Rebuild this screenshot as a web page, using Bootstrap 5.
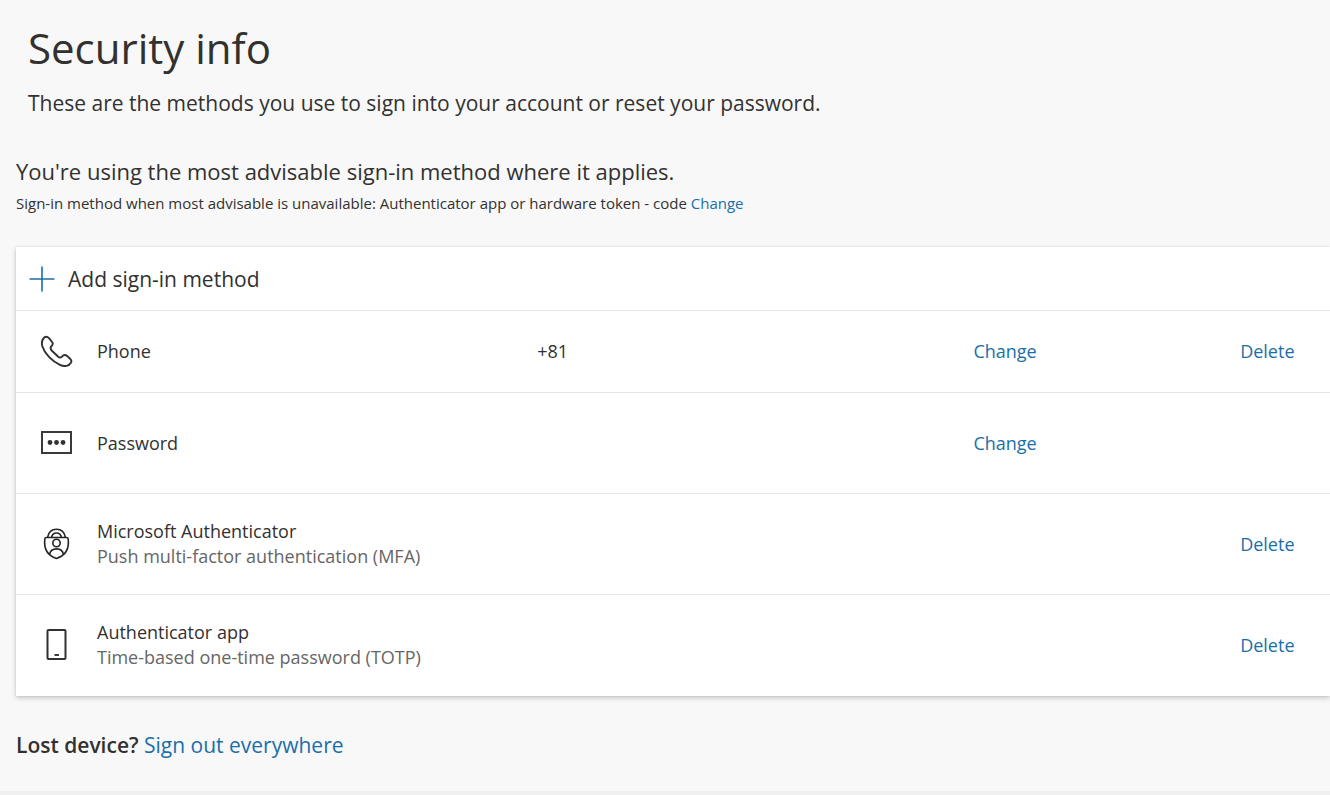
<!DOCTYPE html>
<html lang="en">
<head>
<meta charset="utf-8">
<meta name="viewport" content="width=device-width, initial-scale=1">
<title>Security info</title>
<link href="https://cdn.jsdelivr.net/npm/bootstrap@5.3.0/dist/css/bootstrap.min.css" rel="stylesheet">
<style>
body { background: #f8f8f8; color: #323130; font-family: "Open Sans", "Noto Sans", sans-serif; font-size: 18px; line-height: 25px; }
a { color: #1a6fa8; text-decoration: none; }
a:hover { text-decoration: underline; }
.page-head { padding: 20px 12px 39px; }
.page-title { font-size: 42px; line-height: 56px; margin-bottom: 12px; }
.intro, .add-method, .lost { font-size: 21px; line-height: 30px; }
.default-method { font-size: 22px; line-height: 28px; }
.fallback-method { font-size: 15px; line-height: 36px; }
.methods { margin: 26px 0 34px; box-shadow: 0 2px 5px rgba(0,0,0,.2), 0 0 2px rgba(0,0,0,.1); }
.add-method { color: inherit; height: 63px; }
.method-table { table-layout: fixed; }
.method-table td { border-top: 1px solid #e6e6e6; height: 101px; padding: 0; vertical-align: middle; }
.method-table tr:first-child td { height: 82px; }
.col-icon { width: 81px; }
.col-name { width: 33.5%; }
.col-value { width: 33.2%; }
.col-change { width: 20.3%; }
.hint { color: #666; }
.page-foot { height: 4px; background: #f0f0f0; }
svg { display: block; }
</style>
</head>
<body class="d-flex flex-column min-vh-100">
<main class="flex-grow-1 ps-3">
  <header class="page-head">
    <h1 class="page-title fw-normal">Security info</h1>
    <p class="intro mb-0">These are the methods you use to sign into your account or reset your password.</p>
  </header>
  <section>
    <p class="default-method mb-0">You're using the most advisable sign-in method where it applies.</p>
    <p class="fallback-method mb-0">Sign-in method when most advisable is unavailable: Authenticator app or hardware token - code <a href="#">Change</a></p>
  </section>
  <section class="methods bg-white">
    <button type="button" class="add-method btn border-0 rounded-0 w-100 d-flex align-items-center gap-2 text-start px-2">
      <svg width="36" height="36" viewBox="0 0 36 36" fill="none" stroke="#1a6fa8" stroke-width="1.6" aria-hidden="true"><path d="M18 5.500v25M5.500 18h25"/></svg>
      <span>Add sign-in method</span>
    </button>
    <table class="method-table w-100">
      <colgroup><col class="col-icon"><col class="col-name"><col class="col-value"><col class="col-change"><col></colgroup>
      <tbody>
        <tr>
          <td><svg class="mx-auto" width="34" height="34" viewBox="0 0 34 34" fill="none" stroke="#323130" stroke-width="1.900" stroke-linejoin="round" aria-hidden="true"><path d="M4.300 2.400Q6.800 .8 9 3.200L12.400 7.500Q13.400 9.300 11.400 11.200Q9.800 13 11.400 15.200L18.200 21.800Q20 23.300 21.800 21.800L23.300 20.400Q25 19.300 26.800 20.800L30.200 23.800Q32.200 25.800 30.900 27.700C29 31 24.500 32 20 29.900C12 26 4.500 18.500 2.200 11Q1 5 4.300 2.400Z"/></svg></td>
          <td>Phone</td><td>+81</td><td><a href="#">Change</a></td><td><a href="#">Delete</a></td>
        </tr>
        <tr>
          <td><svg class="mx-auto" width="34" height="34" viewBox="0 0 34 34" aria-hidden="true"><path d="M2 6h29v21h-29z" fill="none" stroke="#3b3a39" stroke-width="2"/><g fill="#323130"><circle cx="10" cy="16.500" r="2.400"/><circle cx="16.500" cy="16.500" r="2.400"/><circle cx="23" cy="16.500" r="2.400"/></g></svg></td>
          <td>Password</td><td></td><td><a href="#">Change</a></td><td></td>
        </tr>
        <tr>
          <td><svg class="mx-auto" width="34" height="34" viewBox="0 0 34 34" fill="none" stroke="#262524" stroke-width="1.600" stroke-linejoin="round" aria-hidden="true"><path d="M7.500 10.500C8.500 5 12 2.300 16.500 2.300s8 2.700 9 8.200M11.500 10.500C12 7.500 14 6 16.500 6s4.500 1.500 5 4.500M6.300 10.500H26.700Q28 10.500 28.200 12C29 19 27.500 28 16.500 31.400C5.500 28 4 19 4.800 12Q5 10.500 6.300 10.500Z"/><circle cx="16.500" cy="16" r="3.700"/><path d="M9.500 27.500C11 20 22 20 23.500 27.500"/></svg></td>
          <td>Microsoft Authenticator<div class="hint">Push multi-factor authentication (MFA)</div></td><td></td><td></td><td><a href="#">Delete</a></td>
        </tr>
        <tr>
          <td><svg class="mx-auto" width="34" height="34" viewBox="0 0 34 34" aria-hidden="true"><rect x="7.500" y="2" width="18" height="29" rx="1" fill="none" stroke="#323130" stroke-width="2"/><path d="M14.500 27h4.500" stroke="#323130" stroke-width="1.900"/></svg></td>
          <td>Authenticator app<div class="hint">Time-based one-time password (TOTP)</div></td><td></td><td></td><td><a href="#">Delete</a></td>
        </tr>
      </tbody>
    </table>
  </section>
  <p class="lost mb-0"><span class="fw-semibold">Lost device?</span> <a href="#">Sign out everywhere</a></p>
</main>
<footer class="page-foot"></footer>
<script src="https://cdn.jsdelivr.net/npm/bootstrap@5.3.0/dist/js/bootstrap.bundle.min.js"></script>
</body>
</html>
